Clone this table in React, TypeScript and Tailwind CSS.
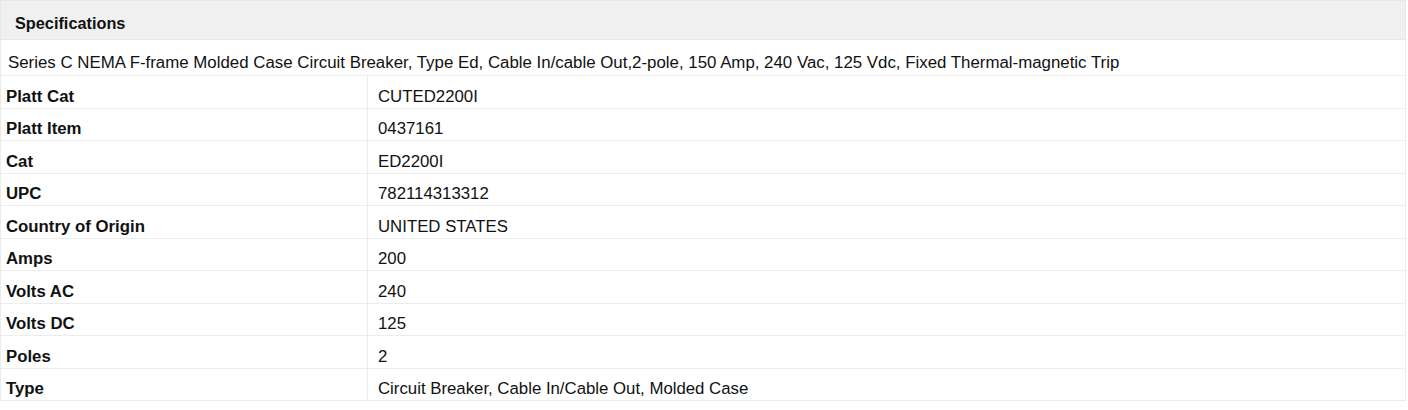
const specs: [string, string][] = [
  ['Platt Cat', 'CUTED2200I'],
  ['Platt Item', '0437161'],
  ['Cat', 'ED2200I'],
  ['UPC', '782114313312'],
  ['Country of Origin', 'UNITED STATES'],
  ['Amps', '200'],
  ['Volts AC', '240'],
  ['Volts DC', '125'],
  ['Poles', '2'],
  ['Type', 'Circuit Breaker, Cable In/Cable Out, Molded Case'],
];

export default function App() {
  return (
    <div className="w-[1406px] bg-white text-[#111] font-['Liberation_Sans',Arial,sans-serif]">
      <div className="h-[40px] flex items-center px-[14px] pt-[6px] bg-[#f0f0f0] border border-[#e8e8e8] text-[16.3px] font-bold">
        Specifications
      </div>
      <div className="h-[36px] flex items-center pl-[7px] pt-[10px] border-x border-b border-[#ececec] text-[16.85px]">
        Series C NEMA F-frame Molded Case Circuit Breaker, Type Ed, Cable In/cable Out,2-pole, 150 Amp, 240 Vac, 125 Vdc, Fixed Thermal-magnetic Trip
      </div>
      {specs.map(([label, value]) => (
        <div key={label} className="h-[32.5px] flex border-x border-b border-[#ececec] text-[16.8px]">
          <div className="w-[367px] flex items-center pl-[5px] pt-[9px] font-bold border-r border-[#ececec]">
            {label}
          </div>
          <div className="flex-1 flex items-center pl-[10px] pt-[9px]">{value}</div>
        </div>
      ))}
    </div>
  );
}
